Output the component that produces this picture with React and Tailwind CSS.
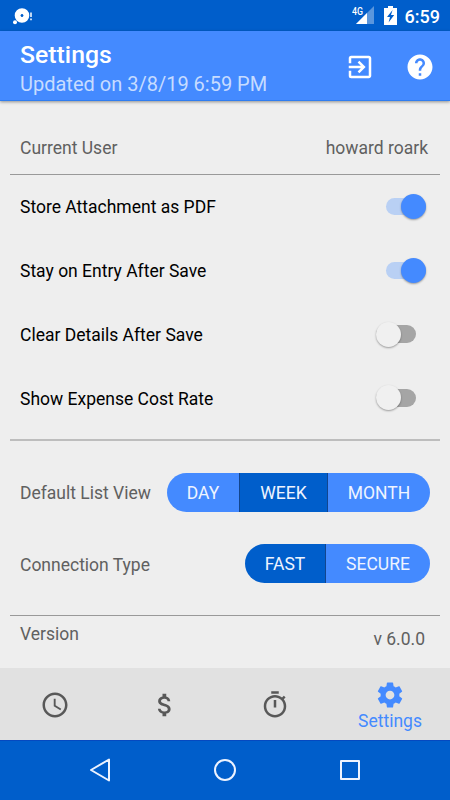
import { MdExitToApp, MdHelp, MdAccessTime, MdAttachMoney } from "react-icons/md";

function StatusBar() {
  return (
    <div className="flex h-[31px] items-center justify-between bg-[#005ecb] pl-[13px] pr-[10px] text-white">
      <svg width="20" height="18" viewBox="0 0 20 18">
        <circle cx="9" cy="8.5" r="4.3" fill="none" stroke="#fff" strokeWidth="6" />
        <circle cx="9" cy="8.5" r="1.3" fill="#005ecb" />
        <circle cx="2" cy="15.3" r="2" fill="#fff" />
        <path d="M18 5.5v4.6M18 11.5v1.8" stroke="#fff" strokeWidth="1.5" />
      </svg>
      <div className="flex items-center">
        <svg className="mr-[10px]" width="22" height="19" viewBox="0 0 22 19">
          <path d="M22 0v18H4z" fill="#5a96dd" />
          <path d="M15 7v11H4z" fill="#fff" />
          <text x="0" y="8.7" fill="#fff" fontSize="11" fontWeight="500" fontFamily="Roboto" textLength="11" lengthAdjust="spacingAndGlyphs">4G</text>
        </svg>
        <svg className="mr-[8px]" width="13" height="19" viewBox="0 0 13 19">
          <path d="M4 0h5v2h4v17H0V2h4z" fill="#fff" />
          <path d="M8.6 4L3 11h3l-1.4 5.5L10.2 9H7z" fill="#005ecb" />
        </svg>
        <span className="pt-[3px] text-[18px] leading-none font-medium">6:59</span>
      </div>
    </div>
  );
}

function Header() {
  return (
    <header className="relative flex h-[70px] items-center justify-between border-b border-[#2f7df0] bg-[#448aff] pl-5 pr-[15px] text-white shadow-[0_1px_3px_rgba(0,0,0,0.4)]">
      <div className="pt-[8px]">
        <h1 className="text-[24.8px] leading-[30px] font-medium">Settings</h1>
        <p className="text-[20px] leading-[29px] text-[#c7dcff]">Updated on 3/8/19 6:59 PM</p>
      </div>
      <div className="flex items-center gap-[30px] pt-[2px]">
        <MdExitToApp size={30} />
        <MdHelp size={30} />
      </div>
    </header>
  );
}

function Toggle({ on }) {
  return on ? (
    <span className="mr-[14px] flex h-[17px] w-[40px] items-center justify-end rounded-full bg-[#b9d0f4]">
      <span className="size-[25px] shrink-0 rounded-full bg-[#448aff] shadow-[0_1px_2px_rgba(0,0,0,0.35)]" />
    </span>
  ) : (
    <span className="mr-[24px] flex h-[18px] w-[40px] items-center rounded-full bg-[#a5a5a5]">
      <span className="size-[25px] shrink-0 rounded-full bg-[#f0f0f0] shadow-[0_1px_2px_rgba(0,0,0,0.35)]" />
    </span>
  );
}

function ToggleRow({ label, on }) {
  return (
    <div className="flex h-[63.7px] items-center justify-between pl-[10px]">
      <span className="pt-[1.5px] text-black">{label}</span>
      <Toggle on={on} />
    </div>
  );
}

function Segments({ items, active, widths }) {
  return (
    <div className="flex h-[39px] overflow-hidden rounded-full text-[#eef4ff]">
      {items.map((item, i) => (
        <button
          key={item}
          className={`flex items-center justify-center pt-[2px] ${widths[i]} ${i > 0 ? "border-l border-[#12458e]" : ""} ${item === active ? "bg-[#005ecb]" : "bg-[#448aff]"}`}
        >
          {item}
        </button>
      ))}
    </div>
  );
}

function BottomTabs() {
  return (
    <nav className="flex h-[72px] items-center bg-[#e1e1e1] pt-[2px] text-[#585858]">
      <div className="flex w-[110px] justify-center"><MdAccessTime size={30} /></div>
      <div className="flex w-[109px] justify-center"><MdAttachMoney size={30} /></div>
      <div className="flex w-[111px] justify-center">
        <svg width="30" height="30" viewBox="0 0 24 24" fill="currentColor">
          <path d="M15 1H9v2h6V1zm-4 13h2V8h-2v6zm8.03-6.61l1.42-1.42c-.43-.51-.9-.99-1.41-1.41l-1.42 1.42C16.07 4.74 14.12 4 12 4c-4.97 0-9 4.03-9 9s4.02 9 9 9 9-4.03 9-9c0-2.12-.74-4.07-1.97-5.61zM12 20c-3.87 0-7-3.13-7-7s3.13-7 7-7 7 3.13 7 7-3.13 7-7 7z" />
        </svg>
      </div>
      <div className="flex w-[120px] flex-col items-center pt-[3px] text-[#448aff]">
        <svg width="30" height="30" viewBox="0 0 24 24" fill="currentColor">
          <path d="M19.43 12.98c.04-.32.07-.64.07-.98s-.03-.66-.07-.98l2.11-1.65c.19-.15.24-.42.12-.64l-2-3.46c-.12-.22-.39-.3-.61-.22l-2.49 1c-.52-.4-1.08-.73-1.69-.98l-.38-2.65C14.46 2.18 14.25 2 14 2h-4c-.25 0-.46.18-.49.42l-.38 2.65c-.61.25-1.17.59-1.69.98l-2.49-1c-.23-.09-.49 0-.61.22l-2 3.46c-.13.22-.07.49.12.64l2.11 1.65c-.04.32-.07.65-.07.98s.03.66.07.98l-2.11 1.65c-.19.15-.24.42-.12.64l2 3.46c.12.22.39.3.61.22l2.49-1c.52.4 1.08.73 1.69.98l.38 2.65c.03.24.24.42.49.42h4c.25 0 .46-.18.49-.42l.38-2.65c.61-.25 1.17-.59 1.69-.98l2.49 1c.23.09.49 0 .61-.22l2-3.46c.12-.22.07-.49-.12-.64l-2.11-1.65zM12 15.5c-1.93 0-3.5-1.57-3.5-3.5s1.57-3.5 3.5-3.5 3.5 1.57 3.5 3.5-1.57 3.5-3.5 3.5z" />
        </svg>
        <span className="text-[17.5px] leading-[23px]">Settings</span>
      </div>
    </nav>
  );
}

function SystemBar() {
  return (
    <div className="flex h-[60px] items-center justify-center gap-[101px] border-t border-[#0549c0] bg-[#005ecb] pb-px">
      <svg width="24" height="26" viewBox="0 0 24 26" fill="none" stroke="#edf3ff" strokeWidth="2" strokeLinejoin="round">
        <path d="M21 2.5v21L3 13z" />
      </svg>
      <svg width="24" height="24" viewBox="0 0 24 24" fill="none" stroke="#edf3ff" strokeWidth="2">
        <circle cx="12" cy="12" r="10" />
      </svg>
      <svg width="24" height="24" viewBox="0 0 24 24" fill="none" stroke="#edf3ff" strokeWidth="2" strokeLinejoin="round">
        <rect x="3" y="3" width="18" height="18" />
      </svg>
    </div>
  );
}

export default function App() {
  return (
    <div className="flex h-[800px] w-[450px] flex-col bg-[#eeeeee] font-['Roboto',sans-serif] text-[17.5px] text-[#606060]">
      <StatusBar />
      <Header />
      <main className="flex h-[567px] flex-col px-[10px]">
        <div className="flex h-[74px] items-center justify-between border-b border-[#999999] pt-[22px] pr-3 pl-[10px]">
          <span>Current User</span>
          <span>howard roark</span>
        </div>
        <div className="h-[266px] border-b-2 border-[#bdbdbd]">
          <ToggleRow label="Store Attachment as PDF" on />
          <ToggleRow label="Stay on Entry After Save" on />
          <ToggleRow label="Clear Details After Save" />
          <ToggleRow label="Show Expense Cost Rate" />
        </div>
        <div className="flex h-[175px] flex-col gap-[32px] border-b border-[#999999] pt-[32px] pr-[10px] pl-[10px]">
          <div className="flex items-center justify-between">
            <span className="pt-[2px]">Default List View</span>
            <Segments items={["DAY", "WEEK", "MONTH"]} active="WEEK" widths={["w-[72px]", "w-[88px]", "w-[103px]"]} />
          </div>
          <div className="flex items-center justify-between">
            <span className="pt-[3px]">Connection Type</span>
            <Segments items={["FAST", "SECURE"]} active="FAST" widths={["w-[80px]", "w-[105px]"]} />
          </div>
        </div>
        <div className="flex justify-between pt-[5px] pr-[15px] pl-[10px]">
          <span>Version</span>
          <span className="pt-[5px]">v 6.0.0</span>
        </div>
      </main>
      <BottomTabs />
      <SystemBar />
    </div>
  );
}
